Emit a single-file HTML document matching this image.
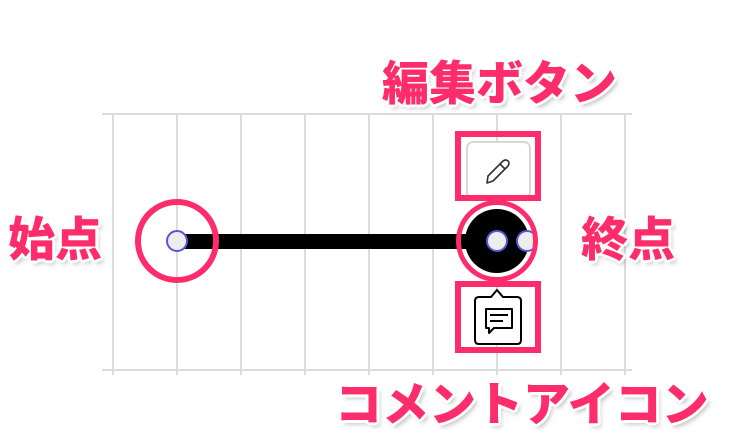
<!DOCTYPE html>
<html><head><meta charset="utf-8"><style>
html,body{margin:0;padding:0;background:#fff;width:732px;height:442px;overflow:hidden;position:relative}
.t{position:absolute;font-family:"Liberation Sans","Noto Sans CJK JP",sans-serif;font-weight:900;font-size:47px;line-height:47px;color:#fd2d6b;white-space:nowrap;letter-spacing:0px;
text-shadow:0 0 2px #fff,2px 2px 0 #fff,-2px -2px 0 #fff,2px -2px 0 #fff,-2px 2px 0 #fff,3px 0 0 #fff,-3px 0 0 #fff,0 3px 0 #fff,0 -3px 0 #fff,3px 4px 5px rgba(0,0,0,.25)}
</style></head><body>
<svg width="732" height="442" style="position:absolute;left:0;top:0">
<g stroke="#dcdcdc" stroke-width="2">
<line x1="102" y1="114" x2="632" y2="114"/>
<line x1="102" y1="370" x2="632" y2="370"/>
<line x1="113" y1="114" x2="113" y2="375"/><line x1="177" y1="114" x2="177" y2="375"/>
<line x1="241" y1="114" x2="241" y2="375"/><line x1="305" y1="114" x2="305" y2="375"/>
<line x1="369" y1="114" x2="369" y2="375"/><line x1="433" y1="114" x2="433" y2="375"/>
<line x1="497" y1="114" x2="497" y2="375"/><line x1="561" y1="114" x2="561" y2="375"/>
<line x1="625" y1="114" x2="625" y2="375"/>
</g>
<circle cx="497" cy="241" r="42" fill="#fff"/>
<rect x="177" y="234" width="300" height="15" fill="#000"/>
<circle cx="497" cy="241" r="32" fill="#000"/>
<circle cx="177" cy="241" r="10" fill="#eee" stroke="#5a55d8" stroke-width="2"/>
<circle cx="497" cy="241" r="10" fill="#eee" stroke="#5a55d8" stroke-width="2"/>
<circle cx="527" cy="241" r="10" fill="#eee" stroke="#5a55d8" stroke-width="2"/>
<circle cx="177" cy="241" r="39" fill="none" stroke="#fd2d6b" stroke-width="6"/>
<circle cx="497" cy="241" r="38.5" fill="none" stroke="#fd2d6b" stroke-width="5"/>
<rect x="467" y="142" width="63" height="56" rx="6" fill="#fff" stroke="#d8d8d8" stroke-width="2"/>
<path d="M487 183 L488 176 L503 161 Q506 159 508 161 Q510 163 508 166 L493 181 Z M500 164 L505 169" fill="none" stroke="#333" stroke-width="1.6" stroke-linejoin="round"/>
<rect x="458" y="134" width="80" height="64" fill="none" stroke="#fd2d6b" stroke-width="6"/>
<path d="M479 297 H491 L497 290 L503 297 H517 Q521 297 521 301 V340 Q521 344 517 344 H479 Q475 344 475 340 V301 Q475 297 479 297 Z" fill="#fff" stroke="#000" stroke-width="2"/>
<path d="M486 309 H512 V328 H494 L489 333 V328 H486 Z" fill="none" stroke="#000" stroke-width="2" stroke-linejoin="round"/>
<line x1="490" y1="315" x2="508" y2="315" stroke="#000" stroke-width="2"/>
<line x1="490" y1="321" x2="503" y2="321" stroke="#000" stroke-width="2"/>
<rect x="458" y="284" width="80" height="66" fill="none" stroke="#fd2d6b" stroke-width="6"/>
</svg>
<div class="t" style="left:382px;top:60px">編集ボタン</div>
<div class="t" style="left:8px;top:216px">始点</div>
<div class="t" style="left:581px;top:216px">終点</div>
<div class="t" style="left:335px;top:381px">コメントアイコン</div>
</body></html>
